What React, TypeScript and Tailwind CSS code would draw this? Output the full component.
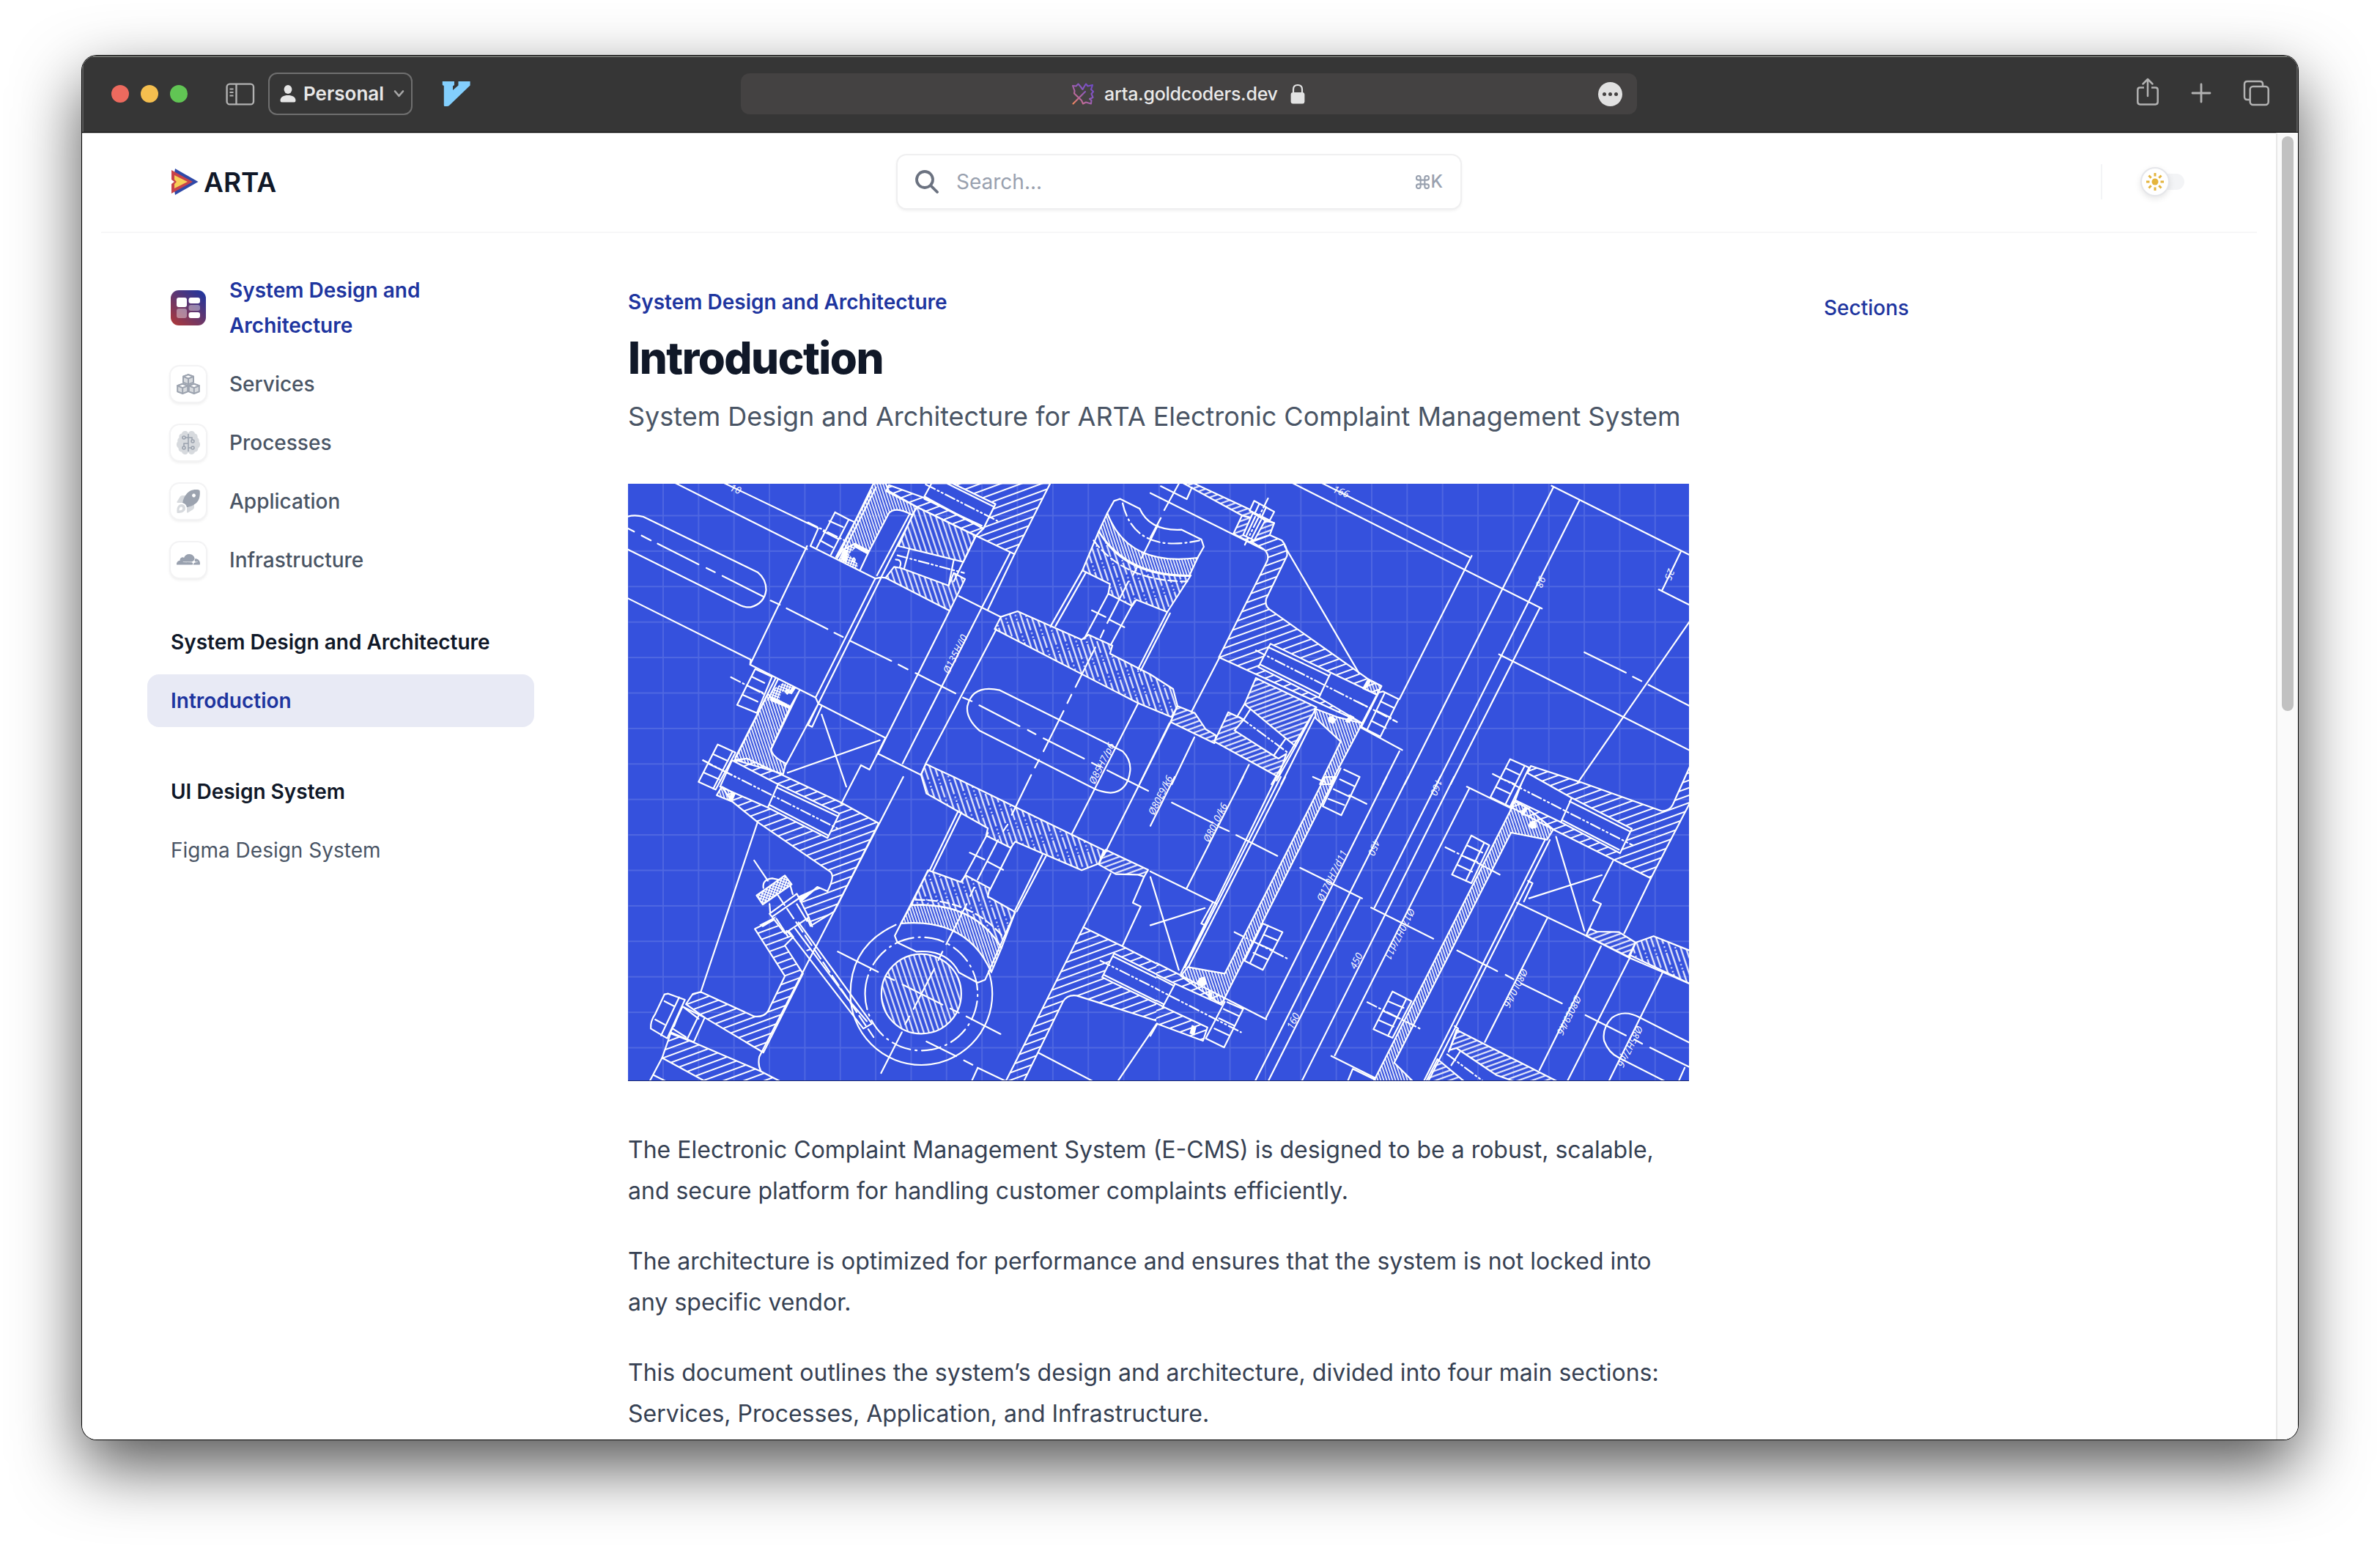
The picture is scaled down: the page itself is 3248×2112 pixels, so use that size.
import type { ReactNode } from "react";
import { FaCloudflare } from "react-icons/fa";

/* ---------- blueprint illustration ---------- */

const HATCH = "url(#hatch)";
const HATCH_TIGHT = "url(#hatchTight)";
const STEEP = "url(#steep)";
const STEEP_FINE = "url(#steepFine)";
const STEEP_DASH = "url(#steepDash)";

function Lines({ d, dash }: { d: string; dash?: string }) {
  return (
    <path
      d={d}
      fill="none"
      stroke="#fff"
      strokeWidth={2.2}
      strokeLinejoin="round"
      strokeLinecap="round"
      strokeDasharray={dash}
      vectorEffect="non-scaling-stroke"
    />
  );
}

function Area({ d, fill }: { d: string; fill: string }) {
  return <path d={d} fill={fill} stroke="#fff" strokeWidth={2.2} strokeLinejoin="round" vectorEffect="non-scaling-stroke" />;
}

function Label({ x, y, angle, children }: { x: number; y: number; angle: number; children: string }) {
  return (
    <text
      transform={`translate(${x} ${y}) rotate(${angle})`}
      fill="#fff"
      fontSize={13.5}
      fontStyle="italic"
      fontFamily="'Open Sans', 'Noto Sans', sans-serif"
    >
      {children}
    </text>
  );
}

const DASHDOT = "14 4 2 4 2 4";

function TopLeft() {
  return (
    <g transform="translate(-7 -10) scale(0.46556 0.33333)">
      <Area fill={HATCH} d="M965 28 L1253 28 L1148 318 L1035 243 L1057 213 L1092 113 Z" />
      <Area fill={STEEP_FINE} d="M735 28 L770 28 L780 60 L862 125 L848 158 Q800 120 780 150 L722 305 L680 275 L645 300 L628 335 Z" />
      <Area fill={HATCH} d="M780 35 L884 88 L1057 213 L1035 243 L862 125 L772 60 Z" />
      <Area fill="#3551dd" d="M905 28 L884 82 L1057 213 L1092 113 L965 28 Z" />
      <Lines d="M884 92 L1052 202 M1085 122 L952 30" />
      <Lines dash={DASHDOT} d="M888 33 L1098 182" />
      <Area fill={STEEP} d="M862 125 L1035 243 L998 350 L808 285 L848 160 Z" />
      <Area fill={STEEP} d="M795 370 L815 375 L955 447 L970 395 L1003 420 L958 550 L770 415 Z" />
      <Lines d="M840 295 L825 375 M970 342 L955 447 M800 340 Q820 340 812 372" />
      <Lines dash={DASHDOT} d="M805 323 L1000 395" />
      <path d="M645 300 L680 273 L722 303 L715 318 L683 292 L662 318 L690 360 L685 382 L635 345 Z" fill="url(#knurl)" />
      <path d="M680 275 L722 305 L716 318 L680 290 Z M650 300 L662 300 L655 352 L640 340 Z" fill="#fff" />
      <Lines d="M677 334 Q684 342 677 350 Q670 342 677 334 M722 305 L695 385" />
      <Lines d="M155 28 L540 298 M298 28 L573 212 L550 285" />
      <Lines d="M622 147 L660 175 L678 186 M622 147 L568 293 M662 177 L610 320 M605 182 L645 207 M588 225 L630 255 M578 262 L615 290 M742 45 L635 340 M728 60 L625 330" />
      <Lines dash={DASHDOT} d="M543 188 L650 262" />
      <Lines d="M12 165 Q35 155 60 165 L395 392 Q420 420 420 465 Q415 520 375 535 Q360 537 345 528 L12 297" />
      <Lines d="M15 213 L33 226 M55 242 L82 262 M102 275 L222 360 M245 375 L270 392 M292 407 L412 492 M433 508 L460 525 M480 540 L600 625 M620 640 L645 657 M665 672 L787 755 M808 770 L835 790 M858 805 L975 888 M997 905 L1023 920 M1045 937 L1163 1022 M1187 1038 L1210 1055 M1233 1072 L1352 1155 M1375 1172 L1400 1190 M1420 1203 L1540 1287" />
      <Lines d="M12 497 L375 750 L373 770 L565 905 L573 930 L770 1070 L748 1135 L874 1222 M540 285 L373 770 M550 285 L740 418 L757 413 L770 415 M740 418 L565 905 M757 415 L573 930 M745 405 L840 155 M757 413 L850 158" />
      <Lines d="M1035 243 L970 430 M958 550 L748 1135 M770 1070 L723 1200 L698 1182 L640 1340 M1135 312 L1053 535 L820 1175 M1070 545 L1148 318 M1095 625 L888 1175 L874 1222 M985 490 L1108 575" />
      <Area fill={STEEP_DASH} d="M1108 575 L1157 552 L1345 668 L1365 648 L1435 692 L1428 725 L1546 810 L1613 870 L1626 940 L1608 985 L1510 928 L1090 625 Z" />
      <Area fill={STEEP_DASH} d="M1395 225 L1347 385 L1428 440 L1423 480 L1493 530 L1505 505 L1596 555 L1665 405 Q1480 410 1395 225 Z" />
      <Area fill={STEEP_FINE} d="M1420 150 L1395 225 Q1470 410 1660 408 L1685 333 Q1480 370 1420 150 Z" />
      <Lines dash="12 5" d="M1380 262 Q1470 430 1655 430" />
      <Lines d="M1420 150 L1440 100 L1458 92 L1515 132 Q1545 225 1638 218 L1696 258 L1703 288 L1684 335 M1596 555 L1510 790 M1604 560 L1518 795 M1347 385 L1255 610 M1358 392 L1268 613 M1423 480 L1352 665 M1500 510 L1430 690" />
      <Lines dash="18 5 2 5" d="M1465 110 Q1500 320 1690 262" />
      <Lines d="M1375 548 L1415 575 M1425 585 L1470 617 M1568 200 L1520 335 M1508 370 L1495 405 M1482 430 L1420 600 M1410 630 L1400 660 M1385 700 L1327 862 M1315 893 L1303 928 M1292 960 L1233 1125 M1220 1160 L1208 1192 M1197 1222 L1140 1385" />
      <Area fill="none" d="M1105 875 L1465 1125 Q1490 1160 1487 1205 Q1480 1290 1430 1295 Q1400 1290 1385 1280 L1045 1040 Q1005 990 1010 940 Q1025 850 1105 875 Z" />
      <Lines d="M1510 930 L1315 1467 M1608 1000 L1410 1550" />
      <Area fill={STEEP_FINE} d="M437 910 L490 945 L435 1115 Q435 1145 478 1175 L470 1218 L328 1160 L425 890 Z" />
      <path d="M440 870 L470 845 L508 865 L490 890 L465 880 L458 915 L495 940 L488 950 L430 915 Z" fill="url(#knurl)" />
      <path d="M500 858 L508 865 L495 892 L484 885 Z M435 900 L455 912 L492 940 L486 950 L432 918 Z" fill="#fff" />
      <Lines d="M518 875 L435 1115 M448 825 L330 1150 M455 830 L425 915 M518 875 L490 945" />
      <Lines d="M573 930 L478 1180 M573 930 L543 1018 L555 1025 L583 940 M482 874 Q490 882 482 890 Q474 882 482 874" />
      <Lines d="M388 788 L335 935 L393 968 L437 820 Z M378 820 L415 845 M363 855 L410 885 M350 893 L395 922" />
      <Lines dash={DASHDOT} d="M317 822 L412 890" />
      <Lines d="M583 975 L655 1270 M483 1213 L753 1080" />
    </g>
  );
}

function TopRight() {
  return (
    <g transform="translate(713 -10) scale(0.47194 0.33333)">
      <Area
        fill={HATCH}
        d="M290 265 L345 240 L380 262 Q397 290 395 325 L335 500 Q330 530 345 545 L630 830 L668 858 L615 1010 L198 740 L338 345 Q345 315 325 295 Z"
      />
      <Area fill="#3551dd" d="M347 685 L655 893 L612 1010 L487 905 L312 780 Z" />
      <Lines d="M520 808 L487 905 M340 698 L515 815 M318 770 L492 893" />
      <Lines dash={DASHDOT} d="M305 712 L713 1005" />
      <Area fill={STEEP_FINE} d="M630 830 L668 858 L655 893 L615 868 Z" />
      <path d="M630 832 L638 838 L622 872 L614 866 Z M577 975 L590 985 L575 1010 L562 1003 Z" fill="#fff" />
      <Area fill="#3551dd" d="M672 880 L718 912 L665 1065 L610 1025 L660 885 Z" />
      <Lines d="M678 885 L627 1035 M665 920 L705 948 M652 958 L695 988 M638 1000 L680 1030" />
      <Lines dash={DASHDOT} d="M600 923 L713 1005" />
      <Lines d="M388 285 L603 805 M0 68 L325 298 M200 740 L118 965" />
      <Area fill={HATCH_TIGHT} d="M95 28 L125 28 L302 145 L290 170 L265 160 Z" />
      <Area fill={HATCH_TIGHT} d="M265 160 L358 190 L345 240 L290 270 L240 235 Z" />
      <Area fill="#3551dd" d="M296 150 L332 180 L300 262 L268 240 Z" />
      <Lines d="M303 165 L278 240 M320 178 L292 255" />
      <Area fill="#3551dd" d="M300 100 L358 145 L345 180 L287 140 Z" />
      <Lines d="M315 112 L303 148 M335 125 L323 162 M287 140 L358 192" />
      <Lines dash={DASHDOT} d="M340 90 L273 280" />
      <Lines d="M30 40 L105 93 L120 45 M82 30 L40 138 M30 170 L0 250" />
      <Lines d="M412 28 L1132 541 M497 28 L922 330 M929 325 L720 912 M1165 45 L735 1260 M1240 100 L828 1260 M1125 541 L868 1260 M1160 38 L1560 322 M1533 310 L1480 465 M1470 463 L1560 527 M1560 592 L1235 1255 M1008 728 L1560 1122" />
      <Lines d="M1255 720 L1375 803 M1395 820 L1420 838 M1440 853 L1560 940" />
      <Area fill={HATCH_TIGHT} d="M305 825 L480 945 L420 1105 L272 932 Z" />
      <Area fill={HATCH_TIGHT} d="M225 965 L270 995 L243 1040 L370 1155 L393 1135 L370 1230 L185 1085 Z" />
      <Lines dash={DASHDOT} d="M258 985 L395 1128" />
      <Lines d="M288 955 L270 995 M390 1075 L358 1140 M272 932 L250 985" />
      <Area fill={HATCH_TIGHT} d="M78 940 L128 968 L160 1035 L190 1060 L185 1092 L58 1005 Z" />
      <Area fill={STEEP_FINE} d="M475 950 L540 985 L612 1010 L600 1045 L520 1260 L490 1260 L550 1085 L478 990 Z" />
      <path d="M515 985 L525 980 L538 995 L528 1015 L514 1003 Z" fill="#fff" />
      <Lines d="M475 985 L378 1260 M463 985 L350 1260 M420 1105 L365 1245 M605 1025 L728 1120 M720 1125 L672 1260" />
      <Lines d="M55 1010 L-30 1255 M127 1068 L62 1260 M285 1180 L257 1260" />
      <Lines d="M560 1200 L605 1230 L552 1387 L498 1350 L550 1195 M548 1240 L590 1268 M530 1280 L575 1310 M515 1320 L560 1345 M470 1230 L505 1252 M575 1305 L625 1340" />
    </g>
  );
}

function BottomLeft() {
  return (
    <g transform="translate(-7 400) scale(0.46556 0.33333)">
      <Area
        fill={HATCH}
        d="M328 -70 L365 -75 L640 105 L750 190 L620 550 L550 610 L520 510 L570 450 L600 468 Q625 400 605 385 L395 185 L320 100 L290 40 Z"
      />
      <Area fill="#3551dd" d="M320 -68 L455 30 L635 150 L600 250 L425 125 L285 40 Z" />
      <Lines d="M455 30 L425 125 M450 42 L628 160 M430 115 L600 238" />
      <Lines dash={DASHDOT} d="M235 -68 L635 215" />
      <Area fill={STEEP_FINE} d="M290 40 L328 68 L318 100 L275 75 Z" />
      <path d="M318 62 L330 70 L320 102 L308 95 Z" fill="#fff" />
      <Area fill="#3551dd" d="M278 -133 L222 20 L272 52 L330 -100 Z" />
      <Lines d="M265 -93 L308 -65 M250 -55 L295 -25 M237 -18 L282 10 M320 -100 L265 48" />
      <Lines dash={DASHDOT} d="M235 -68 L330 0" />
      <Lines d="M822 0 L400 1145 Q395 1180 405 1205 M395 185 L228 882" />
      <Area
        fill={HATCH}
        d="M387 622 L455 575 L500 655 L475 690 L528 805 L412 1128 L240 985 L185 930 L205 888 L228 880 L385 980 Q412 985 425 960 L475 815 Z"
      />
      <Area fill={HATCH} d="M140 1050 L205 1085 L405 1205 L460 1245 L240 1245 L115 1150 Z" />
      <Lines d="M115 1150 L78 1247 M90 1220 L125 1245" />
      <Area fill="#3551dd" d="M175 940 L240 985 L208 1085 L140 1045 Z" />
      <Lines d="M222 978 L188 1075 M180 945 L222 990 M146 1030 L185 1065 M165 965 L150 1020" />
      <Area fill="#3551dd" d="M133 887 L182 912 L130 1070 L82 1030 Q80 1000 95 970 L122 890 Z" />
      <Lines d="M165 902 L112 1058 M122 918 L150 938 M95 993 L122 1013" />
      <Area fill="#3551dd" d="M510 478 L545 575 L475 640 L430 560 Z" />
      <Lines d="M518 495 L438 572 M510 520 L540 590 M450 580 L485 655 M490 440 L498 480 M430 520 L432 555 M520 510 L545 480 M545 575 L555 612 M480 630 L500 660" />
      <path d="M512 490 L575 450 L525 510 Z M400 605 L450 570 L440 590 L410 615 Z" fill="#fff" />
      <Area fill="url(#knurl)" d="M475 403 L495 440 L410 522 L392 485 Z" />
      <Lines d="M385 342 L425 425 M412 455 Q408 420 438 415 L455 420" />
      <Lines d="M495 650 L705 1030 L730 1010 L515 595 M505 620 L660 910 M660 910 L715 1000 M540 710 L550 705" />
      <Lines dash="16 6" d="M455 485 L735 1065" />

      <Area
        fill={STEEP_DASH}
        d="M888 -53 L970 0 L1410 300 L1395 355 L1345 382 L1150 265 L1137 290 L1065 240 L1070 210 L890 68 L874 -10 Z"
      />
      <Area fill={HATCH_TIGHT} d="M1415 298 L1540 380 L1528 408 L1510 400 L1445 398 L1395 358 Z" />
      <Area
        fill={STEEP_DASH}
        d="M895 382 L990 430 L1005 403 L1075 455 L1070 490 L1150 553 L1110 700 Q1030 510 845 525 Z"
      />
      <Area fill={STEEP_FINE} d="M845 525 Q1030 510 1110 700 L1080 800 Q1010 575 815 600 Z" />
      <Lines dash="12 5" d="M858 503 Q1020 500 1115 655" />
      <Lines d="M983 140 L900 380 M993 145 L908 388 M1240 325 L1155 550 M1230 318 L1150 545 M1070 230 L993 430 M1140 285 L1075 465 M1017 310 L1060 338 M1070 347 L1115 380 M1128 195 L1115 222 M1100 258 L1040 420 M1030 452 L1018 488 M1008 520 L948 685 M937 715 L925 750" />
      <Lines d="M895 382 L797 650 L805 678 L860 715 Q950 705 985 800 L1040 842 L1062 830 L1150 553" />

      <ellipse cx="875" cy="888" rx="117" ry="163" fill={STEEP} />
      <Lines d="M758 888 A117 163 0 1 1 992 888 A117 163 0 1 1 758 888" />
      <Lines d="M800 605 Q667 690 667 888 A208 291 0 0 0 1083 888 Q1083 840 1072 795" />
      <Lines dash="26 7 2 7" d="M710 888 A165 232 0 1 1 1040 888 A165 232 0 1 1 710 888" />
      <Lines d="M630 715 L748 798 M820 850 L937 932 M960 948 L985 965 M1007 980 L1107 1052 M913 785 L852 950 M840 980 L828 1012 M818 1045 L757 1212 M890 1083 L977 1143 M1000 1160 L1025 1178 M1040 1190 L1122 1245 M1040 1192 L1022 1247 M770 815 L795 832" />

      <g clipPath="url(#leftHalf)">
        <Area
          fill={HATCH}
          d="M1350 615 L1460 690 L1580 775 L1580 1005 L1330 895 Q1302 890 1290 920 L1175 1247 L1122 1247 Z"
        />
        <Area fill="#3551dd" d="M1440 722 L1590 825 L1590 945 L1405 820 Z" />
        <Lines d="M1438 735 L1568 825 M1410 810 L1568 920" />
        <Lines dash={DASHDOT} d="M1400 752 L1590 885" />
      </g>
      <Lines d="M1430 395 L1350 615 M1528 408 L1495 515 L1518 530 L1465 690 M1220 1130 L1380 1247 M1565 1010 L1450 1247" />
    </g>
  );
}

function BottomRight() {
  return (
    <g transform="translate(713 400) scale(0.47194 0.33333)">
      <Area
        fill={HATCH}
        d="M1100 -45 L1245 22 L1480 140 Q1502 138 1510 115 L1562 -50 L1562 100 L1447 415 L1165 215 L1045 125 L1055 95 Z"
      />
      <Area fill="#3551dd" d="M1085 -20 L1217 85 L1392 212 L1358 312 L1187 185 L1055 95 Z" />
      <Lines d="M1217 90 L1187 185 M1212 100 L1385 222 M1192 178 L1355 298" />
      <Area fill="#3551dd" d="M1040 -73 L1095 -38 L1040 122 L983 83 Z" />
      <Lines d="M1082 -45 L1028 108 M1028 -35 L1068 -8 M1012 5 L1055 30 M1000 42 L1042 70" />
      <Lines dash={DASHDOT} d="M990 -12 L1395 280" />
      <Area fill={STEEP_FINE} d="M1050 98 L1088 125 L1165 215 L1147 257 L1043 228 L705 1170 L760 1247 L645 1247 L1040 140 Z" />
      <path d="M1082 120 L1090 130 L1080 160 L1071 152 Z M1098 182 L1112 178 L1118 208 L1102 213 L1092 200 Z" fill="#fff" />
      <Lines d="M1142 255 L790 1247 M1155 258 L803 1247 M1092 425 L1105 435 L1080 510 M1060 515 L1260 650 L1385 740 L1562 848" />
      <Lines d="M1173 245 L1255 630 M1095 497 L1305 402 M1338 343 L1280 505 L1303 520 L1263 640 M1447 415 L1370 640" />
      <Area fill={HATCH_TIGHT} d="M1270 620 L1290 633 L1355 635 L1403 678 L1385 738 L1260 650 Z" />
      <Area fill={STEEP_DASH} d="M1403 678 L1455 652 L1562 712 L1562 848 L1385 728 Z" />
      <Lines d="M1147 580 L967 1085 M1303 693 L1125 1200 M1387 738 L1205 1247 M1480 803 L1325 1247" />
      <Lines d="M887 710 L1003 795 M1027 810 L1050 828 M1072 845 L1190 927 M1258 975 L1375 1058 M1400 1075 L1422 1092 M1445 1108 L1562 1190" />
      <Lines d="M1562 1090 L1415 985 Q1370 950 1335 985 Q1305 1030 1312 1080 Q1325 1130 1355 1150 L1490 1247 M1545 1190 L1527 1247" />
      <Area fill={HATCH_TIGHT} d="M885 1035 L1175 1245 L1050 1245 L1000 1220 L885 1110 L865 1118 Z" />
      <Area fill={HATCH_TIGHT} d="M830 1155 L908 1247 L797 1247 Z" />
      <Lines d="M880 1020 L890 1030 L862 1125 M895 1125 L870 1180" />
      <Lines dash={DASHDOT} d="M858 1135 L960 1243" />
      <Area fill="none" d="M928 240 L980 280 L928 435 L872 400 Z" />
      <Lines d="M900 322 L945 348 M915 280 L960 310 M888 360 L930 388 M965 270 L912 425" />
      <Lines dash={DASHDOT} d="M853 288 L950 355" />
      <Lines d="M950 355 L1010 400" />
      <Area fill="none" d="M700 878 L755 918 L700 1068 L645 1033 Z" />
      <Lines d="M687 918 L732 945 M673 958 L718 988 M660 995 L703 1022 M740 908 L687 1060" />
      <Lines dash={DASHDOT} d="M627 922 L783 1033" />
      <Lines d="M915 40 L1045 130 M921 50 L533 1140 M523 1142 L650 1232 M638 535 L818 662 M585 1195 L570 1247 M585 1195 L650 1240" />
      <Lines d="M683 0 L333 990 M745 0 L302 1247 M838 0 L648 535 M878 0 L437 1247 M605 500 L340 1247 M433 372 L612 497" />
      <Area fill={STEEP_FINE} d="M505 0 L535 0 L205 932 L88 815 L108 778 L215 805 Z" />
      <path d="M142 822 L158 817 L163 848 L149 858 L134 840 Z M168 875 L178 883 L180 912 L166 903 Z" fill="#fff" />
      <Lines d="M365 0 L88 805 M377 0 L100 780 M390 0 L110 778 M248 238 L367 323 M62 105 L180 188 M200 205 L227 222 M268 0 L105 455 M0 387 L190 518 M180 515 L147 600 L160 608 M0 410 L82 790 M0 607 L157 537 M70 0 L0 200" />
      <Area fill="#3551dd" d="M325 600 L382 635 L325 790 L272 752 Z" />
      <Lines d="M340 608 L288 762 M327 645 L368 670 M312 683 L355 710 M298 720 L340 748" />
      <Lines dash={DASHDOT} d="M243 635 L398 745" />
      <g clipPath="url(#rightHalf)">
        <Area fill={HATCH} d="M-10 742 L88 812 L215 905 L205 932 L70 845 L-10 790 Z" />
        <Area fill={HATCH} d="M-10 905 L40 943 L165 1025 L152 1080 L-10 995 Z" />
        <Lines d="M-10 798 L65 853 M-10 895 L38 930 M70 850 L35 943" />
        <Lines dash={DASHDOT} d="M0 855 L262 1045" />
      </g>
      <path d="M120 1015 L133 1023 L127 1058 L113 1050 Z" fill="#fff" />
      <Lines d="M215 920 L160 1070 M222 922 L268 950 L213 1107 L160 1070 M212 950 L255 978 M198 988 L242 1018 M185 1030 L228 1058 M215 905 L335 992 M20 1010 L0 1060" />
    </g>
  );
}

function Blueprint() {
  return (
    <svg viewBox="0 0 1448 815" className="block h-[815px] w-[1448px] bg-[#3551dd]" preserveAspectRatio="none">
      <defs>
        <clipPath id="leftHalf">
          <rect x="0" y="-200" width="1564" height="1500" />
        </clipPath>
        <clipPath id="rightHalf">
          <rect x="17" y="-200" width="1600" height="1500" />
        </clipPath>
        <pattern id="grid" x="47" y="42.5" width="48.35" height="48.4" patternUnits="userSpaceOnUse">
          <path d="M0 1 H48.35 M1 0 V48.4" stroke="#fff" strokeOpacity="0.13" strokeWidth="1.8" />
        </pattern>
        <pattern id="hatch" width="9.6" height="9.6" patternUnits="userSpaceOnUse" patternTransform="scale(2.13 3) rotate(-20)">
          <path d="M0 4.8 H9.6" stroke="#fff" strokeWidth="2" />
        </pattern>
        <pattern id="hatchTight" width="6.4" height="6.4" patternUnits="userSpaceOnUse" patternTransform="scale(2.13 3) rotate(-20)">
          <path d="M0 3.2 H6.4" stroke="#fff" strokeWidth="1.9" />
        </pattern>
        <pattern id="steep" width="6.8" height="6.8" patternUnits="userSpaceOnUse" patternTransform="scale(2.13 3) rotate(71.5)">
          <path d="M0 3.4 H6.8" stroke="#fff" strokeWidth="1.9" />
        </pattern>
        <pattern id="steepFine" width="3.8" height="3.8" patternUnits="userSpaceOnUse" patternTransform="scale(2.13 3) rotate(71.5)">
          <path d="M0 1.9 H3.8" stroke="#fff" strokeWidth="1.6" />
        </pattern>
        <pattern id="steepDash" width="30" height="13.6" patternUnits="userSpaceOnUse" patternTransform="scale(2.13 3) rotate(71.5)">
          <path d="M0 3.4 H30" stroke="#fff" strokeWidth="2" />
          <path d="M0 10.2 H17 M20.5 10.2 H22.5 M26 10.2 H28" stroke="#fff" strokeWidth="2" />
        </pattern>
        <pattern id="knurl" width="3.6" height="3.6" patternUnits="userSpaceOnUse" patternTransform="scale(2.13 3) rotate(20)">
          <path d="M0 1 H3.6 M1 0 V3.6" stroke="#fff" strokeWidth="1.7" />
        </pattern>
      </defs>
      <rect width="1448" height="815" fill="url(#grid)" />
      <TopLeft />
      <TopRight />
      <BottomLeft />
      <BottomRight />
      <Label x={438} y={260} angle={-63.5}>Ø135H/I0</Label>
      <Label x={637} y={411} angle={-63.5}>Ø85H7/p6</Label>
      <Label x={718} y={453} angle={-63.5}>Ø80E9/k6</Label>
      <Label x={793} y={490} angle={-63.5}>Ø80L0/k6</Label>
      <Label x={948} y={571} angle={-63.5}>Ø170H7/d11</Label>
      <Label x={993} y={663} angle={-63.5}>450</Label>
      <Label x={907} y={745} angle={-63.5}>160</Label>
      <Label x={1018} y={484} angle={112}>450</Label>
      <Label x={1103} y={402} angle={112}>160</Label>
      <Label x={1066} y={578} angle={116.5}>Ø170H7/d11</Label>
      <Label x={1220} y={660} angle={116.5}>Ø80L0/k6</Label>
      <Label x={1293} y={697} angle={116.5}>Ø80E9/k6</Label>
      <Label x={1377} y={738} angle={116.5}>Ø85H7/p6</Label>
      <Label x={1244} y={125} angle={112}>98</Label>
      <Label x={1420} y={115} angle={112}>25</Label>
      <Label x={961} y={11} angle={22}>166</Label>
      <Label x={138} y={9} angle={22}>10</Label>
      <path d="M0 814.5 H1448" stroke="#1c2a70" strokeWidth="1" />
    </svg>
  );
}

/* ---------- browser chrome ---------- */

function Toolbar() {
  return (
    <div className="flex h-[105px] items-center border-b border-black bg-[#363636] shadow-[inset_0_2px_0_#6f716d,inset_2px_0_0_#5c5c5c,inset_-2px_0_0_#5c5c5c]">
      <div className="ml-10 flex gap-4">
        <span className="size-6 rounded-full bg-[#ed6a5e]" />
        <span className="size-6 rounded-full bg-[#f5bf4f]" />
        <span className="size-6 rounded-full bg-[#61c554]" />
      </div>
      <svg className="ml-[52px] h-[31px] w-10" viewBox="0 0 40 31" fill="none" stroke="#b2b2b2" strokeWidth="2.4">
        <rect x="1.6" y="1.6" width="36.4" height="27.8" rx="4" />
        <path d="M14.5 1.6 V29.4" />
        <path d="M5.5 8.5 H10.5 M5.5 13 H10.5 M5.5 17.5 H10.5" strokeWidth="1.8" />
      </svg>
      <div className="ml-[18px] flex h-[58px] w-[197px] items-center rounded-[12px] border-2 border-[#6f6f6f] pl-3.5">
        <svg className="h-6 w-[22px]" viewBox="0 0 22 24" fill="#e6e6e6">
          <ellipse cx="11" cy="6" rx="5.4" ry="6" />
          <path d="M0.5 21 C0.5 16.5 5 14 11 14 S21.5 16.5 21.5 21 Q21.5 23.5 19.5 23.5 H2.5 Q.5 23.5 .5 21 Z" />
        </svg>
        <span className="ml-2.5 w-[110px] text-[26px] leading-none font-semibold whitespace-nowrap text-[#e8e8e8]">Personal</span>
        <svg className="ml-[13px] h-3 w-[15px]" viewBox="0 0 15 12" fill="none" stroke="#a6a6a6" strokeWidth="2.6" strokeLinecap="round" strokeLinejoin="round">
          <path d="M2 2.5 L7.5 8.8 L13 2.5" />
        </svg>
      </div>
      <svg className="ml-[40px] h-9 w-[40px]" viewBox="0 0 40 36" fill="#83cffd">
        <path d="M.8 1 H17 V6 L15 7.5 V13 L22.5 6.5 V1 H38.6 V6.5 L10 34 Q9 35 7 35 H4 Q2.8 35 2.8 33.5 V7 L.8 6 Z" />
      </svg>
      <div className="ml-[368px] flex h-14 w-[1223px] items-center rounded-[12px] bg-[#444242]">
        <svg className="ml-[452px] size-[30px]" viewBox="0 0 30 30" fill="none" strokeWidth="2.1" strokeLinejoin="round" strokeLinecap="round">
          <defs>
            <linearGradient id="leaf" x1="0" y1="1" x2="1" y2="0">
              <stop offset="0" stopColor="#f58a5a" />
              <stop offset=".3" stopColor="#b9689c" />
              <stop offset=".6" stopColor="#8a58bd" />
              <stop offset="1" stopColor="#6d48c8" />
            </linearGradient>
          </defs>
          <path
            stroke="url(#leaf)"
            d="M1.5 28.5 L18 12 M1 4 L5.5 4.5 L8.5 1.5 L11.5 5 L14.5 9 L17 4.5 L19 1.5 L21.5 4.5 L28 3 L26 9 L29 12 L26.5 15 L28.5 20 L24 22 L26.5 24 L26 28.5 L19 26.5 L15 28.5 L13 24 L3 14.5 L3.5 11 Z"
          />
        </svg>
        <span className="ml-[14px] w-[242px] text-[25px] leading-none font-medium tracking-[-0.01em] whitespace-nowrap text-[#e9e9e9]">arta.goldcoders.dev</span>
        <svg className="ml-3 h-7 w-5" viewBox="0 0 20 28">
          <rect x=".6" y="12" width="18.8" height="15.4" rx="3" fill="#e3e3e3" />
          <path d="M4 12 V8 Q4 2 10 2 T16 8 V12" fill="none" stroke="#e3e3e3" strokeWidth="2.2" />
        </svg>
        <span className="ml-auto mr-5 flex size-[33px] items-center justify-center gap-[3px] rounded-full bg-[#e1e1e1]">
          <i className="size-[5px] rounded-full bg-[#444242]" />
          <i className="size-[5px] rounded-full bg-[#444242]" />
          <i className="size-[5px] rounded-full bg-[#444242]" />
        </span>
      </div>
      <div className="ml-auto mr-[39px] flex h-10 items-center gap-[43px]">
        <svg className="mt-[-4px] h-10 w-[32px]" viewBox="0 0 32 40" fill="none" stroke="#b2b2b2" strokeWidth="2.5" strokeLinecap="round" strokeLinejoin="round">
          <path d="M11 13.6 H5.5 Q2.3 13.6 2.3 16.8 V33 Q2.3 36.4 5.5 36.4 H26.5 Q29.7 36.4 29.7 33 V16.8 Q29.7 13.6 26.5 13.6 H21" strokeLinecap="butt" />
          <path d="M16 25 V2.5 M9.5 8.5 L16 2 L22.5 8.5" />
        </svg>
        <svg className="mt-[-3px] size-7" viewBox="0 0 28 28" stroke="#b2b2b2" strokeWidth="2.8" strokeLinecap="round">
          <path d="M14 2 V26 M2 14 H26" />
        </svg>
        <svg className="mt-[-3px] size-9" viewBox="0 0 36 36" fill="none" stroke="#b2b2b2" strokeWidth="2.5">
          <rect x="9.7" y="9" width="25" height="25" rx="4" />
          <path d="M9.5 27 H6 Q2 27 2 23 V6 Q2 2 6 2 H23 Q27 2 27 6 V9" />
        </svg>
      </div>
    </div>
  );
}

/* ---------- page ---------- */

function Header() {
  return (
    <header className="mx-[26px] flex h-[137px] items-center border-b-2 border-[#f7f7f8] pr-[99px] pb-px pl-[95px]">
      <svg className="h-9 w-[38px]" viewBox="0 0 38 36">
        <path d="M6 0 L37.5 18 L6 36 L5 30 L26 18 L5 6 Z" fill="#2f49a8" />
        <path d="M1 2 L30 18 L1 34 V21 L5 18 L1 15 Z" fill="#c8434a" />
        <path d="M5 9 L23 18 L5 27 V21 L8 18 L5 15 Z" fill="#f7cf57" />
      </svg>
      <span className="ml-[7px] w-[111px] text-[37px] leading-none font-semibold text-gray-900">ARTA</span>
      <div className="ml-[836px] flex h-[72px] w-[768px] items-center rounded-[12px] bg-white px-6 shadow-[0_0_0_2px_#efeff0,0_2px_4px_1px_rgba(0,0,0,0.08)]">
        <svg className="size-8" viewBox="0 0 32 32" fill="none" stroke="#6b7280" strokeWidth="3.8" strokeLinecap="round">
          <circle cx="13" cy="13" r="11" />
          <path d="M21.5 21.5 L30 30" />
        </svg>
        <span className="ml-6 text-[28px] leading-none text-gray-400">Search...</span>
        <span className="ml-auto flex items-center text-[24px] leading-none font-medium text-gray-400">
          <svg className="mr-0.5 size-[19px]" viewBox="2 2 20 20" fill="none" stroke="currentColor" strokeWidth="2.2">
            <path d="M15 6v12a3 3 0 1 0 3-3H6a3 3 0 1 0 3 3V6a3 3 0 1 0-3 3h12a3 3 0 1 0-3-3" />
          </svg>
          K
        </span>
      </div>
      <div className="ml-auto flex items-center">
        <span className="h-12 w-0.5 bg-gray-100" />
        <span className="relative ml-14 flex h-[22px] w-14 items-center rounded-full bg-gray-100">
          <span className="absolute -left-1 flex size-10 items-center justify-center rounded-full border-2 border-[#e5e6ea] bg-white shadow-[0_3px_8px_rgba(0,0,0,0.1)]">
            <svg className="size-6 shrink-0" viewBox="0 0 24 24" fill="#e4b43c" stroke="#e4b43c" strokeWidth="3">
              <circle cx="12" cy="12" r="4.5" stroke="none" />
              <path d="M12 0 V4.5 M12 19.5 V24 M0 12 H4.5 M19.5 12 H24 M3.5 3.5 L6.7 6.7 M17.3 17.3 L20.5 20.5 M20.5 3.5 L17.3 6.7 M3.5 20.5 L6.7 17.3" />
            </svg>
          </span>
        </span>
      </div>
    </header>
  );
}

function Cube({ x, y }: { x: number; y: number }) {
  return (
    <g transform={`translate(${x} ${y})`} stroke="#9ca3af" strokeWidth="2" strokeLinejoin="round">
      <path d="M0 -6.5 L7 -4 V4 L0 6.7 L-7 4 V-4 Z" fill="#d7dade" />
      <path d="M0 -6.5 L7 -4 L0 -1.2 L-7 -4 Z" fill="#fff" />
      <path d="M0 -1 V6.7" />
    </g>
  );
}

function CubesIcon() {
  return (
    <svg className="size-8" viewBox="0 0 32 32">
      <Cube x={16} y={9.7} />
      <Cube x={8.2} y={22.3} />
      <Cube x={23.8} y={22.3} />
    </svg>
  );
}

function BrainIcon() {
  return (
    <svg className="size-8" viewBox="0 0 32 32">
      <path
        fill="#d7dade"
        d="M11.5 0 C14 0 16 1.5 16 4 C16 1.5 18 0 20.5 0 C23 0 24.5 1.5 25 3.5 C28 4 29 6.5 28.5 9 C30.500 10.5 31 12.5 30.5 14.5 C33 17 32.5 21.5 29.5 23.5 C29.5 26.5 27.5 28.5 25 28.5 C24.5 30.5 22.5 32 20.5 32 C18 32 16 30 16 28 C16 30 14 32 11.5 32 C9.500 32 7.5 30.5 7 28.5 C4.5 28.5 2.5 26.5 2.5 23.5 C-.5 21.5 -1 17 1.5 14.5 C1 12.5 1.5 10.5 3.5 9 C3 6.5 4 4 7 3.5 C7.5 1.5 9 0 11.5 0 Z"
      />
      <g fill="none" stroke="#9ca3af" strokeWidth="1.6">
        <path d="M16 4 V28 M12 9 H21 V12 M10 21 V17 H16 M16 23 H20" />
        <circle cx="10" cy="9" r="2" />
        <circle cx="22" cy="14" r="2" />
        <circle cx="10" cy="23" r="2" />
        <circle cx="22" cy="23" r="2" />
      </g>
    </svg>
  );
}

function RocketIcon() {
  return (
    <svg className="size-8" viewBox="0 0 32 32">
      <g fill="#d7dade">
        <path d="M.5 16.5 L4.8 9.5 Q5.8 8 7.8 8 H13 C10 11 9 14 8 18 H1.5 Q0 18 .5 16.5 Z" />
        <path d="M14 25 C18 23.5 21 22 24 19.5 V24 Q24 26 22.5 27 L15.5 31.5 Q14 32 14 30.5 Z" />
        <path fillRule="evenodd" d="M.7 32 C-.3 27 1 20 6.5 20 C10 20 12.3 22.5 12 26 C11.5 31 6 32 .7 32 Z M3.5 28.5 C6 28.5 8 28 8.2 25.8 C8.3 24.2 7.3 23.3 6 23.6 C4 24 3.5 26 3.5 28.5 Z" />
      </g>
      <path
        fill="#9ca3af"
        fillRule="evenodd"
        d="M8 18 C9 12 13 5 18 2 C22 -.2 27 -.2 30.5 .4 Q31.5 .6 31.6 1.5 C32.2 6 31.7 11 29.5 15 C26.5 20 20 23 14 24.5 C13.5 21 11.5 19 8 18 Z M23.5 5.6 A2.4 2.4 0 1 0 23.51 5.6 Z"
      />
    </svg>
  );
}

function NavItem({ icon, label }: { icon: ReactNode; label: string }) {
  return (
    <li className="flex h-12 items-center gap-8">
      <span className="flex size-12 items-center justify-center rounded-[12px] bg-white shadow-[0_0_0_2px_#f3f3f4,0_2px_4px_1px_rgba(0,0,0,0.09)]">
        {icon}
      </span>
      <span className="text-[28px] leading-[48px] font-medium text-gray-600">{label}</span>
    </li>
  );
}

function Sidebar() {
  return (
    <nav className="w-[528px] shrink-0 pt-[54px] text-[28px] leading-[48px]">
      <ul className="flex flex-col gap-8 pl-8">
        <li className="flex items-center gap-8">
          <svg className="size-12 shrink-0" viewBox="0 0 48 48">
            <defs>
              <linearGradient id="nav" x1="0.1" y1="1" x2="0.9" y2="0">
                <stop offset="0" stopColor="#ab383b" />
                <stop offset="1" stopColor="#1e359f" />
              </linearGradient>
            </defs>
            <rect width="48" height="48" rx="11" fill="url(#nav)" />
            <g fill="#fff">
              <rect x="8" y="10" width="14" height="13" rx="3" />
              <rect x="24.5" y="10" width="15.5" height="8" rx="3" />
              <rect x="24.5" y="30" width="15.5" height="8" rx="3" />
              <rect x="24.5" y="20" width="15.5" height="8" rx="3" opacity=".4" />
              <rect x="8" y="25" width="14" height="13" rx="3" opacity=".4" />
            </g>
          </svg>
          <span className="w-[300px] font-semibold text-[#1e359f]">System Design and Architecture</span>
        </li>
        <NavItem icon={<CubesIcon />} label="Services" />
        <NavItem icon={<BrainIcon />} label="Processes" />
        <NavItem icon={<RocketIcon />} label="Application" />
        <NavItem icon={<FaCloudflare className="size-8 text-gray-400" />} label="Infrastructure" />
      </ul>
      <p className="mt-16 pl-8 font-semibold text-gray-900">System Design and Architecture</p>
      <p className="mt-5 flex h-[72px] items-center rounded-[16px] bg-[#e8eaf5] pl-8 font-semibold text-[#1e359f]">Introduction</p>
      <p className="mt-16 pl-8 font-semibold text-gray-900">UI Design System</p>
      <p className="mt-8 pl-8 text-gray-600">Figma Design System</p>
    </nav>
  );
}

function Article() {
  return (
    <main className="ml-32 w-[1448px] shrink-0 pt-[70px]">
      <p className="text-[28px] leading-[48px] font-semibold text-[#1e359f]">System Design and Architecture</p>
      <h1 className="mt-4 text-[60px] leading-[72px] font-extrabold tracking-[-0.025em] text-gray-900">Introduction</h1>
      <p className="mt-4 text-[36px] leading-[56px] tracking-[-0.0005em] whitespace-nowrap text-gray-600">
        System Design and Architecture for ARTA Electronic Complaint Management System
      </p>
      <div className="mt-16">
        <Blueprint />
      </div>
      <div className="mt-[66px] space-y-10 text-[32px] leading-[56px] text-gray-700">
        <p>
          The Electronic Complaint Management System (E-CMS) is designed to be a robust, scalable,
          <br />
          and secure platform for handling customer complaints efficiently.
        </p>
        <p>
          The architecture is optimized for performance and ensures that the system is not locked into
          <br />
          any specific vendor.
        </p>
        <p>
          This document outlines the system’s design and architecture, divided into four main sections:
          <br />
          Services, Processes, Application, and Infrastructure.
        </p>
      </div>
    </main>
  );
}

export default function App() {
  return (
    <div className="h-[2112px] w-[3248px] overflow-hidden bg-white px-[112px] pt-[76px] font-['Inter',sans-serif]">
      <div className="h-[1888px] w-[3024px] rounded-[20px] shadow-[0_0_0_1px_#000,0_36px_90px_rgba(0,0,0,0.68)]">
        <div className="flex h-full flex-col overflow-hidden rounded-[20px] bg-white">
          <Toolbar />
          <div className="flex min-h-0 flex-1 shadow-[inset_0_1px_0_#bbb]">
            <div className="w-[2994px]">
              <Header />
              <div className="flex pl-[89px]">
                <Sidebar />
                <Article />
                <p className="ml-[184px] pt-[78px] text-[28px] leading-[48px] font-medium text-[#1e359f]">Sections</p>
              </div>
            </div>
            <div className="w-[30px] border-l-2 border-[#e8e8e8] bg-[#fafafa] pt-[5px] pl-1.5">
              <div className="h-[784px] w-4 rounded-full bg-[#c1c1c1]" />
            </div>
          </div>
        </div>
      </div>
    </div>
  );
}
